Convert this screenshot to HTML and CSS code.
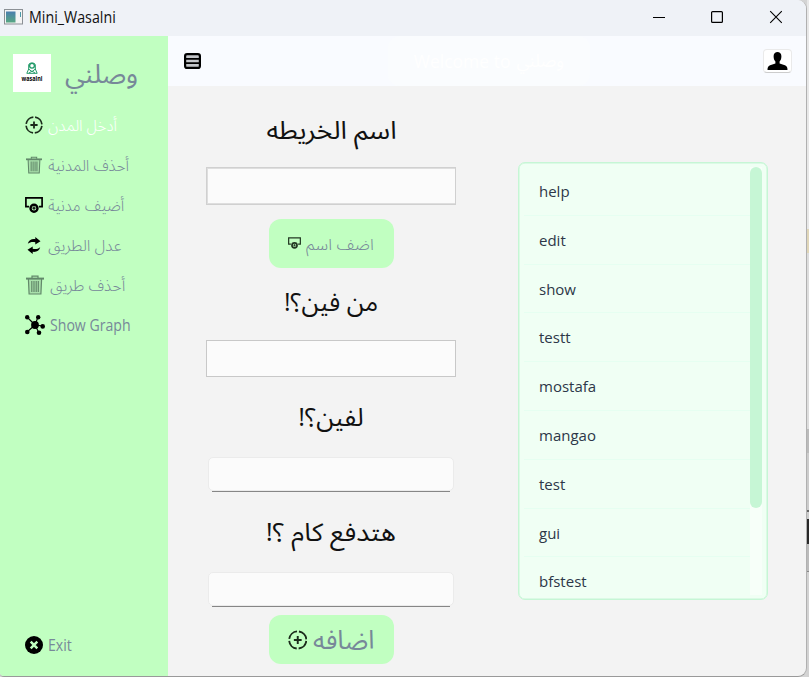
FILE: index.html
```html
<!DOCTYPE html>
<html lang="ar">
<head>
<meta charset="utf-8">
<title>Mini_Wasalni</title>
<link rel="stylesheet" href="styles.css">
</head>
<body>
<svg class="symbols" aria-hidden="true">
  <symbol id="i-add" viewBox="0 0 20 20"><circle cx="10" cy="10" r="8.8" fill="none" stroke="currentColor" stroke-width="1.9" stroke-dasharray="11.8 2.02" stroke-dashoffset="-1"/><path d="M10 6v8M6 10h8" stroke="currentColor" stroke-width="2"/></symbol>
  <symbol id="i-trash" viewBox="0 0 18 20"><path d="M2.400 4h13.200l-.7 15H3.100Z" fill="currentColor" opacity=".25"/><path d="M6 3V1.200h6V3M2.400 4l.7 15h11.800l.7-15M5.800 6v11M8 6v11M10.200 6v11M12.300 6v11" fill="none" stroke="currentColor" stroke-width="1.2"/><path d="M0 3.600h18" stroke="currentColor" stroke-width="2"/></symbol>
  <symbol id="i-node" viewBox="0 0 18 16"><path d="M4 9.600H.9V.9h16.200V9.600H14" fill="none" stroke="currentColor" stroke-width="1.7"/><circle cx="9" cy="11.200" r="3.500" fill="none" stroke="currentColor" stroke-width="2.4"/><path d="M9 9.600v3.200M7.400 11.200h3.200" stroke="currentColor" stroke-width="1.2"/></symbol>
  <symbol id="i-swap" viewBox="0 0 14 17"><path d="M.8 6.800C1.500 3.400 4.600 1.700 8.300 2.200V0L13.500 4.200 8.300 7.400V5.200C5.400 4.500 3 5 .8 6.800ZM13.200 10.200c-.7 3.400-3.800 5.100-7.500 4.600V17L.5 12.800l5.200-3.200v2.200c2.900.7 5.300.2 7.500-1.600Z" fill="currentColor"/></symbol>
  <symbol id="i-graph" viewBox="0 0 20 20"><path d="M2 2l8 8M13 2l-3 8M18 11l-8-1M2 17l8-7M14 18l-4-8" stroke="currentColor" stroke-width="1.1"/><g fill="currentColor"><circle cx="10" cy="10" r="3.900"/><circle cx="2.200" cy="2.200" r="2.200"/><circle cx="13.200" cy="2.200" r="2.200"/><circle cx="17.700" cy="11.400" r="2.300"/><circle cx="2.300" cy="17" r="2.300"/><circle cx="14" cy="17.700" r="2.300"/></g></symbol>
</svg>
<div class="screen">
<div class="window">
  <header class="titlebar">
    <svg class="app-icon" viewBox="0 0 19 16"><defs><linearGradient id="g" x1="0" y1="0" x2="0" y2="1"><stop offset="0" stop-color="#4b7fae"/><stop offset="1" stop-color="#57a782"/></linearGradient></defs><rect x=".5" y=".5" width="18" height="14.5" fill="#f4f4f4" stroke="#8b9095"/><rect x="2" y="2.500" width="9.500" height="11" fill="url(#g)"/><path d="M16.500 3v5" stroke="#4a9aaa"/></svg>
    <span class="app-name">Mini_Wasalni</span>
    <svg class="controls" viewBox="0 0 130 14"><path d="M0 7.500h12" stroke="#000"/><rect x="58.600" y="1.600" width="10.800" height="10.800" rx="1" fill="none" stroke="#000" stroke-width="1.2"/><path d="M117.200 1.200l11.600 11.600M128.800 1.200l-11.600 11.600" stroke="#000" stroke-width="1.1"/></svg>
  </header>
  <div class="body">
    <nav class="sidebar">
      <div class="brand">
        <svg class="logo" viewBox="0 0 38 38"><rect width="38" height="38" fill="#fff"/><circle cx="19" cy="11.700" r="2.400" fill="none" stroke="#219a68" stroke-width="1.3"/><path d="M15.700 15v-4c0-2.700 6.600-2.700 6.600 0v4l1.900 4.300H13.800Zm0 0 3.300 2.700 3.300-2.700M16 19l3-2 3 2" fill="none" stroke="#219a68"/><text x="19" y="26.600" textLength="21" lengthAdjust="spacingAndGlyphs" text-anchor="middle">wasalni</text></svg>
        <span class="brand-name" dir="rtl">وصلني</span>
      </div>
      <a class="item active"><svg class="i-add"><use href="#i-add"/></svg><span class="t1" dir="rtl">أدخل المدن</span></a>
      <a class="item"><svg class="i-trash"><use href="#i-trash"/></svg><span class="t2" dir="rtl">أحذف المدنية</span></a>
      <a class="item"><svg class="i-node"><use href="#i-node"/></svg><span class="t3" dir="rtl">أضيف مدنية</span></a>
      <a class="item"><svg class="i-swap"><use href="#i-swap"/></svg><span class="t4" dir="rtl">عدل الطريق</span></a>
      <a class="item"><svg class="i-trash big"><use href="#i-trash"/></svg><span class="t5" dir="rtl">أحذف طريق</span></a>
      <a class="item"><svg class="i-graph"><use href="#i-graph"/></svg><span class="latin">Show Graph</span></a>
      <a class="item exit"><svg class="i-exit" viewBox="0 0 18 18"><circle cx="9" cy="9" r="9"/><path d="M5.700 5.700l6.600 6.600M12.300 5.700l-6.600 6.600" stroke="#c1ffc1" stroke-width="2.500"/></svg><span class="latin">Exit</span></a>
    </nav>
    <section class="content">
      <div class="topbar">
        <svg class="menu" viewBox="0 0 17 16"><rect x="1.100" y="1.100" width="14.800" height="13.800" rx="2" fill="#c4c6ca" stroke="#000" stroke-width="2.200"/><path d="M1 5.800h15M1 10.200h15" stroke="#000" stroke-width="1.800"/></svg>
        <div class="welcome"><span>Welcome to</span> <span dir="rtl">وصلني</span></div>
        <div class="user"><svg viewBox="0 0 21 18"><path d="M6.600 4C6.600-1.200 14.400-1.200 14.400 4c0 3-.7 4.300-1.800 5.600v1.900l5.300 1.800c2 .8 2.600 2 2.600 4.700H.5c0-2.700.6-3.900 2.600-4.700l5.300-1.800V9.600C7.300 8.300 6.600 7 6.600 4Z"/></svg></div>
      </div>
      <div class="page">
        <form class="form">
          <label class="l1" dir="rtl"><span>اسم الخريطه</span></label>
          <input class="square first" aria-label="map">
          <button class="add-name" type="button"><svg><use href="#i-node"/></svg><span dir="rtl">اضف اسم</span></button>
          <label class="l2" dir="rtl"><span>من فين؟!</span></label>
          <input class="square" aria-label="from">
          <label class="l3" dir="rtl"><span>لفين؟!</span></label>
          <div class="field"><input class="soft" aria-label="to"></div>
          <label class="l4" dir="rtl"><span>هتدفع كام ؟!</span></label>
          <div class="field"><input class="soft" aria-label="cost"></div>
          <button class="add" type="button"><svg><use href="#i-add"/></svg><span dir="rtl">اضافه</span></button>
        </form>
        <div class="list">
          <ul><li>help</li><li>edit</li><li>show</li><li>testt</li><li>mostafa</li><li>mangao</li><li>test</li><li>gui</li><li>bfstest</li></ul>
          <div class="track"><div class="thumb"></div></div>
        </div>
      </div>
    </section>
  </div>
</div>
<div class="backdrop"></div>
</div>
</body>
</html>
```
FILE: styles.css
```css
* { box-sizing: border-box; }
body { margin: 0; font-family: "Open Sans", "Noto Sans", "Noto Sans Arabic", "DejaVu Sans", sans-serif; overflow: hidden; }
.symbols { position: absolute; width: 0; height: 0; }
.screen { width: 809px; height: 677px; display: flex; background: #d4d4d4; }
.window { width: 807px; height: 677px; background: #f3f3f3; border-right: 1px solid #b0b0b0; border-bottom: 1px solid #999; border-radius: 0 9px 9px 4px; overflow: hidden; flex: none; }
.backdrop { flex: 1; background: linear-gradient(#e8e8e8 0 229px, #e0d6b8 229px 253px, #ddd 253px 429px, #bbb 429px 453px, #ccc 453px 510px, #666 510px 512px, #ccc 512px 519px, #292929 519px 544px, #bbb 544px 571px, #888 571px 572px, #d2d2d2 572px); }
.titlebar { height: 36px; background: #eff2f7; display: flex; align-items: center; padding: 0 23px 2px 4px; }
.app-icon { width: 19px; height: 16px; }
.app-name { font-size: 15.5px; line-height: 20px; margin-left: 6px; color: #111; transform: scaleX(.92); transform-origin: left; }
.controls { width: 130px; height: 14px; margin-left: auto; }
.body { display: flex; height: 640px; }
.sidebar { width: 168px; flex: none; background: #c1ffc1; display: flex; flex-direction: column; padding-top: 18px; color: #778899; }
.brand { display: flex; height: 51px; padding-left: 13px; gap: 14px; }
.logo { width: 38px; height: 38px; flex: none; }
.logo text { font: bold 6.5px "Open Sans", sans-serif; }
.brand-name { font-size: 26px; line-height: 38px; height: 38px; white-space: nowrap; transform: scaleX(1.03); transform-origin: left; }
.item { height: 40px; display: flex; align-items: center; padding-left: 25px; gap: 5px; font-size: 16px; line-height: 24px; font-weight: 350; white-space: nowrap; }
.item span { transform-origin: left; }
.item svg { color: #000; flex: none; }
.t1 { transform: scaleX(.96); }
.t2 { transform: scaleX(.97); }
.t3 { transform: scaleX(.96); }
.item .i-add { color: #1b2b1b; }
.active { color: #fff; }
.i-add { width: 18px; height: 18px; }
.item .i-trash { width: 16px; height: 18px; margin: 0 1px; color: #62886a; }
.item .i-trash.big { width: 18px; height: 20px; }
.i-node { width: 18px; height: 16px; }
.i-swap { width: 14px; height: 17px; margin: 0 2px; }
.i-graph, .form .add svg { width: 20px; height: 20px; }
.latin { display: inline-block; font-size: 15.5px; font-weight: 400; transform: scaleX(.91); }
.i-exit { width: 18px; height: 18px; }
.exit { margin-top: auto; margin-bottom: 11px; }
.content { flex: 1; }
.topbar { height: 50px; background: #f9fbff; display: flex; align-items: center; padding: 0 14px 0 16px; }
.menu { width: 17px; height: 16px; }
.welcome { width: 202px; height: 50px; margin-left: 187px; border-radius: 12px; background: #fafcfe; color: #fff; font-size: 17.5px; display: flex; align-items: center; justify-content: center; gap: 6px; }
.user { width: 29px; height: 24px; margin-left: auto; background: #fff; border: 1px solid #eaeaea; border-bottom-color: #ccc; border-radius: 4px; display: flex; align-items: center; justify-content: center; }
.user svg { width: 21px; height: 18px; }
.page { display: flex; height: 590px; }
.form { width: 250px; margin-left: 38px; display: flex; flex-direction: column; align-items: center; }
label { font-size: 25px; line-height: 38px; color: #111; white-space: nowrap; display: flex; justify-content: center; align-items: center; }
.l1 { height: 81px; padding-top: 5px; transform: scaleX(1.075); }
.l2 { height: 72px; padding-bottom: 6px; }
.l3 { height: 80px; padding-bottom: 2px; transform: scaleX(1.02); }
.l4 { height: 80px; padding-bottom: 2px; transform: scaleX(1.07); }
input { display: block; padding: 0; outline: 0; }
.square { width: 250px; height: 37px; background: #fbfbfb; border: 1px solid #c8c8c8; }
.first { height: 38px; border: 2px solid #dedede; border-right: 1px solid #c8c8c8; outline: 1px solid #d0d0d0; outline-offset: -1px; }
.field { width: 246px; height: 35px; flex: none; }
.field::after { content: ""; display: block; height: 1px; margin: 0 4px; background: #868686; }
.soft { width: 246px; height: 34px; border: 1px solid #ebebeb; border-radius: 5px; background: #fbfbfb; }
button { width: 125px; height: 49px; flex: none; border: 0; border-radius: 12px; background: #c1ffc1; color: #778899; display: flex; align-items: center; padding: 0 19px 0 18px; gap: 5px; font-family: inherit; white-space: nowrap; }
.add-name { margin-top: 14px; padding-left: 19px; font-size: 16px; font-weight: 350; }
.add-name span { transform: scaleX(1.05); transform-origin: left; padding-top: 2px; }
.add-name svg { width: 13px; height: 12px; color: #233823; margin-top: -2px; }
.add { margin-top: 8px; padding-left: 19px; gap: 6px; font-size: 26px; }
.add span { padding-top: 2px; }
.form .add svg { color: #1b2b1b; }
.list { width: 250px; height: 438px; margin: 76px 0 0 62px; border: 1px solid #c6f6d5; box-shadow: inset 0 0 0 .5px #c6f6d5; border-radius: 7px; background: #f0fff4; padding: 4px 4px 4px 5px; display: flex; overflow: hidden; }
ul { list-style: none; margin: 0; padding: 0; width: 226px; flex: none; height: 429px; overflow: hidden; }
li { height: 48.8px; border-bottom: 1px solid #e6fff1; padding-left: 15px; font-size: 15px; line-height: 48px; color: #2d3748; }
.track { width: 12px; height: 428px; background: #f7fff9; }
.thumb { height: 341px; background: #c6f6d5; border-radius: 6px; }
```
